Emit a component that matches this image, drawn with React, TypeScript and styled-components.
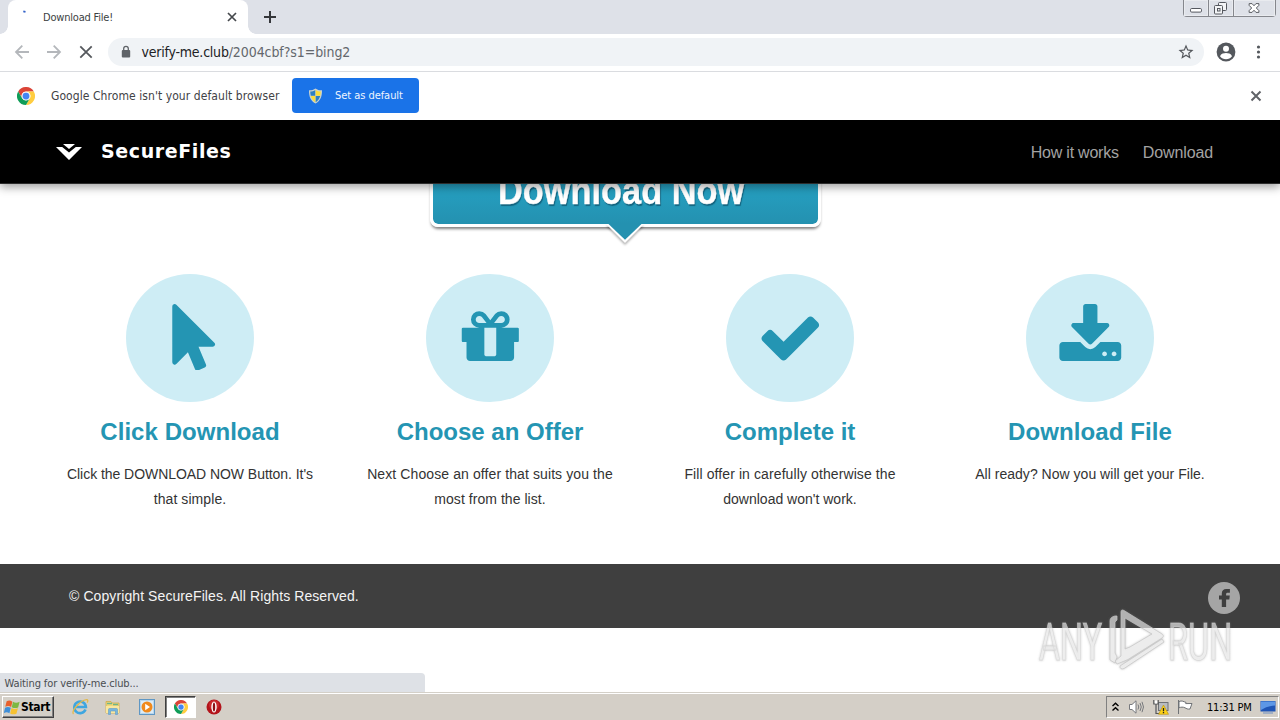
import React from "react";
import styled, { createGlobalStyle } from "styled-components";

const TEAL = "#2495b3";
const UI_FONT = '"DejaVu Sans Condensed", "DejaVu Sans", sans-serif';
const WEB_FONT = '"Liberation Sans", Arial, sans-serif';

const Global = createGlobalStyle`
  * { box-sizing: border-box; }
  body { margin: 0; background: #fff; overflow: hidden; }
`;

const Screen = styled.div`
  position: relative;
  width: 1280px;
  height: 720px;
  display: flex;
  flex-direction: column;
  overflow: hidden;
  background: #fff;
  font-family: ${UI_FONT};
`;

/* Browser chrome */
const TabStrip = styled.div`
  height: 34px;
  display: flex;
  align-items: flex-start;
  background: #dee1e8;
  padding-left: 8px;
`;

const Tab = styled.div`
  position: relative;
  width: 240px;
  height: 34px;
  display: flex;
  align-items: center;
  padding: 0 10px 0 13px;
  border-radius: 8px 8px 0 0;
  background: #fff;

  &::before,
  &::after {
    content: "";
    position: absolute;
    bottom: 0;
    width: 8px;
    height: 8px;
  }
  &::before {
    left: -8px;
    background: radial-gradient(circle at 0 0, transparent 7.5px, #fff 8px);
  }
  &::after {
    right: -8px;
    background: radial-gradient(circle at 100% 0, transparent 7.5px, #fff 8px);
  }
`;

const TabTitle = styled.span`
  flex: 1;
  margin-left: 6px;
  font-size: 11px;
  letter-spacing: -0.2px;
  color: #3c3f43;
`;

const NewTab = styled.div`
  margin: 10px 0 0 15px;
  height: 14px;
  display: flex;
`;

const WindowButtons = styled.div`
  margin-left: auto;
  margin-right: 4px;
  height: 17px;
  display: flex;
  border: 1px solid #85878d;
  border-top: 0;
  border-radius: 0 0 4px 4px;
`;

const WindowButton = styled.div<{ $w: number }>`
  width: ${(p) => p.$w}px;
  height: 16px;
  display: flex;
  justify-content: center;
  box-shadow: inset 0 0 0 1px #e9ebef;
  & + & {
    border-left: 1px solid #85878d;
  }
`;

const Toolbar = styled.div`
  height: 38px;
  display: flex;
  align-items: center;
  padding: 0 14px 1px;
  border-bottom: 1px solid #dadce0;
`;

const NavIcon = styled.div<{ $w: number }>`
  width: ${(p) => p.$w}px;
  height: 16px;
  display: flex;
`;

const Omnibox = styled.div`
  flex: 1;
  height: 28px;
  display: flex;
  align-items: center;
  margin-right: 12px;
  padding: 0 9px 0 13px;
  border-radius: 14px;
  background: #f0f3f6;
`;

const Url = styled.div`
  flex: 1;
  margin-left: 10.5px;
  font-size: 14px;
  color: #63676c;
  letter-spacing: -0.08px;
`;

const Host = styled.span`
  color: #202124;
  letter-spacing: -0.22px;
`;

const InfoBar = styled.div`
  height: 48px;
  display: flex;
  align-items: center;
  padding: 0 18px 1px 17px;
`;

const InfoText = styled.span`
  margin-left: 16px;
  width: 241px;
  font-size: 12px;
  letter-spacing: 0.07px;
  color: #3f4246;
  white-space: nowrap;
`;

const DefaultButton = styled.div`
  width: 127px;
  height: 35px;
  display: flex;
  align-items: center;
  gap: 12px;
  margin-right: auto;
  padding-left: 16px;
  border-radius: 4px;
  background: #1a73e8;
  color: #eef5ff;
  font-size: 11px;
  letter-spacing: -0.05px;
`;

/* Web page */
const Page = styled.main`
  position: relative;
  height: 572px;
  display: flex;
  flex-direction: column;
  overflow: hidden;
  font-family: ${WEB_FONT};
`;

const SiteHeader = styled.header`
  position: relative;
  z-index: 2;
  flex: none;
  height: 64px;
  display: flex;
  align-items: center;
  padding: 0 67px 0 56px;
  background: #000;
  border-bottom: 1px solid #2c2c2c;
  box-shadow: 0 3px 9px rgba(0, 0, 0, 0.38);
`;

const Brand = styled.span`
  margin: 0 auto 2px 19px;
  font-family: "DejaVu Sans", sans-serif;
  font-weight: 700;
  font-size: 19px;
  letter-spacing: 0.6px;
  color: #fff;
`;

const NavLink = styled.a<{ $ls: number }>`
  margin-left: 24px;
  margin-top: 2px;
  font-size: 16px;
  letter-spacing: ${(p) => p.$ls}px;
  color: #a3a3a3;
`;

const Hero = styled.section`
  flex: none;
  height: 90px;
  display: flex;
  flex-direction: column;
  align-items: center;
  padding-right: 29px;
`;

const DownloadButton = styled.div`
  flex: none;
  width: 391px;
  height: 105px;
  margin-top: -62px;
  display: flex;
  justify-content: center;
  border: 3px solid #fff;
  border-radius: 8px;
  background: linear-gradient(#2dadcd 0, #259dbe 68%, #2491b0 100%);
  background-clip: padding-box;
  box-shadow: 0 3px 3px -1px rgba(0, 0, 0, 0.5);
`;

const ButtonLabel = styled.span`
  margin-top: 44px;
  margin-right: 9px;
  font-weight: 700;
  font-size: 38px;
  line-height: 44px;
  white-space: nowrap;
  color: #fff;
  -webkit-text-stroke: 0.4px #fff;
  text-shadow: 1px 2px 1px rgba(10, 70, 95, 0.65);
  transform: scaleX(0.905);
`;

const Pointer = styled.svg`
  position: relative;
  flex: none;
  left: -0.5px;
  margin-top: -3px;
  filter: drop-shadow(0 2px 1px rgba(0, 0, 0, 0.3));
`;

const Steps = styled.section`
  flex: none;
  height: 290px;
  display: grid;
  grid-template-columns: repeat(4, 300px);
  padding-left: 40px;
`;

const Step = styled.article`
  display: flex;
  flex-direction: column;
  align-items: center;
  text-align: center;
`;

const Circle = styled.div`
  width: 128px;
  height: 128px;
  display: flex;
  align-items: center;
  justify-content: center;
  padding-bottom: 2px;
  border-radius: 50%;
  background: #ceedf5;
`;

const StepTitle = styled.h2<{ $ls?: number }>`
  margin: 16px 0;
  font-size: 24px;
  line-height: 28px;
  letter-spacing: ${(p) => p.$ls ?? 0}px;
  color: ${TEAL};
`;

const StepLine = styled.p<{ $ls: number }>`
  margin: 0;
  font-size: 14px;
  line-height: 25px;
  letter-spacing: ${(p) => p.$ls}px;
  white-space: nowrap;
  color: #333;
`;

const Footer = styled.footer`
  flex: none;
  height: 64px;
  display: flex;
  align-items: center;
  justify-content: space-between;
  padding: 0 40px 0 69px;
  background: #3f3f3f;
  color: #f4f4f4;
  font-size: 14px;
  letter-spacing: 0.09px;
`;

const FacebookBadge = styled.svg`
  margin-top: 4px;
`;

const StatusBubble = styled.div`
  position: absolute;
  left: 0;
  bottom: 0;
  width: 425px;
  height: 19px;
  padding-left: 4.5px;
  border-radius: 0 4px 0 0;
  background: #dee1e6;
  color: #4a4d51;
  font: 11px/21px ${UI_FONT};
  letter-spacing: -0.11px;
`;

const Watermark = styled.svg`
  position: absolute;
  left: 1030px;
  top: 484px;
  filter: drop-shadow(0 0 1.2px rgba(130, 130, 130, 0.6));
`;

/* Taskbar */
const Taskbar = styled.div`
  height: 28px;
  display: flex;
  align-items: center;
  padding: 1px 0 0 2px;
  border-top: 1px solid #d4d0c8;
  background: #d4cfc7;
  box-shadow: inset 0 1px 0 #fff;
`;

const StartButton = styled.div`
  width: 52px;
  height: 22px;
  display: flex;
  align-items: center;
  padding-left: 1px;
  background: #d4d0c8;
  border: 1px solid;
  border-color: #fff #404040 #404040 #fff;
  box-shadow: inset -1px -1px 0 #808080;
  font-weight: 700;
  font-size: 12px;
  letter-spacing: -0.35px;
  color: #000;
`;

const Launcher = styled.div<{ $active?: boolean; $ml: number }>`
  width: ${(p) => (p.$active ? 31 : 18)}px;
  height: 22px;
  margin-left: ${(p) => p.$ml}px;
  display: flex;
  align-items: center;
  justify-content: center;
  ${(p) =>
    p.$active &&
    `background: #fff;
     border: 1px solid;
     border-color: #404040 #fff #fff #404040;
     box-shadow: inset 1px 1px 0 #808080;`}
`;

const Tray = styled.div`
  margin-left: auto;
  margin-right: 1px;
  width: 173px;
  height: 22px;
  display: flex;
  align-items: center;
  padding-left: 5px;
  border: 1px solid;
  border-color: #808080 #fff #fff #808080;
`;

const TrayIcon = styled.svg<{ $ml?: number }>`
  flex: none;
  margin-left: ${(p) => p.$ml ?? 0}px;
`;

const Clock = styled.span`
  margin: 0 0 0 14px;
  width: 53px;
  font-size: 11px;
  letter-spacing: -0.2px;
  white-space: nowrap;
  color: #000;
`;

const ChromeLogo = ({ size }: { size: number }) => (
  <svg width={size} height={size} viewBox="0 0 48 48">
    <path fill="#db4437" d="M3.2 12A24 24 0 0 1 44.8 12H24A12 12 0 0 0 13.6 30Z" />
    <path fill="#ffcd40" d="M44.8 12A24 24 0 0 1 24 48L34.4 30A12 12 0 0 0 24 12Z" />
    <path fill="#0f9d58" d="M3.2 12L13.6 30A12 12 0 0 0 34.4 30L24 48A24 24 0 0 1 3.2 12Z" />
    <circle cx="24" cy="24" r="11.5" fill="#f1f1f1" />
    <circle cx="24" cy="24" r="9" fill="#4285f4" />
  </svg>
);

const StepIcon = ({ children }: { children: React.ReactNode }) => (
  <svg width="66.6" height="66.6" viewBox="0 0 1792 1792" fill={TEAL}>
    {children}
  </svg>
);

type Line = [text: string, spacing: number];

const steps: { title: string; ls: number; lines: Line[]; icon: React.ReactNode }[] = [
  {
    title: "Click Download",
    ls: 0.05,
    lines: [
      ["Click the DOWNLOAD NOW Button. It's", -0.05],
      ["that simple.", 0.07],
    ],
    icon: (
      <path
        transform="translate(411 0)"
        d="M1133 1043q31 30 14 69-17 40-59 40h-382l201 476q10 25 0 49t-34 35l-177 75q-25 10-49 0t-35-34l-191-452-312 312q-19 19-45 19-12 0-24-5-40-17-40-59v-1504q0-42 40-59 12-5 24-5 27 0 45 19z"
      />
    ),
  },
  {
    title: "Choose an Offer",
    ls: 0,
    lines: [
      ["Next Choose an offer that suits you the", 0.1],
      ["most from the list.", 0.05],
    ],
    icon: (
      <path d="M1056 1356v-716h-320v716q0 25 18 38.5t46 13.5h192q28 0 46-13.5t18-38.5zm-456-844h195l-126-161q-26-31-69-31-40 0-68 28t-28 68 28 68 68 28zm688-96q0-40-28-68t-68-28q-43 0-69 31l-125 161h194q40 0 68-28t28-68zm376 256v320q0 14-9 23t-23 9h-96v416q0 40-28 68t-68 28h-1088q-40 0-68-28t-28-68v-416h-96q-14 0-23-9t-9-23v-320q0-14 9-23t23-9h440q-93 0-158.5-65.5t-65.5-158.5 65.5-158.5 158.5-65.5q107 0 168 77l128 165 128-165q61-77 168-77 93 0 158.5 65.5t65.5 158.5-65.5 158.5-158.5 65.5h440q14 0 23 9t9 23z" />
    ),
  },
  {
    title: "Complete it",
    ls: 0,
    lines: [
      ["Fill offer in carefully otherwise the", 0.1],
      ["download won't work.", 0],
    ],
    icon: (
      <path d="M1671 566q0 40-28 68l-724 724-136 136q-28 28-68 28t-68-28l-136-136-362-362q-28-28-28-68t28-68l136-136q28-28 68-28t68 28l294 295 656-657q28-28 68-28t68 28l136 136q28 28 28 68z" />
    ),
  },
  {
    title: "Download File",
    ls: 0.1,
    lines: [["All ready? Now you will get your File.", 0.02]],
    icon: (
      <path d="M1344 1344q0-26-19-45t-45-19-45 19-19 45 19 45 45 19 45-19 19-45zm256 0q0-26-19-45t-45-19-45 19-19 45 19 45 45 19 45-19 19-45zm128-224v320q0 40-28 68t-68 28h-1472q-40 0-68-28t-28-68v-320q0-40 28-68t68-28h465l135 136q58 56 136 56t136-56l136-136h464q40 0 68 28t28 68zm-325-569q17 41-14 70l-448 448q-18 19-45 19t-45-19l-448-448q-31-29-14-70 17-39 59-39h256v-448q0-26 19-45t45-19h256q26 0 45 19t19 45v448h256q42 0 59 39z" />
    ),
  },
];

export default function App() {
  return (
    <Screen>
      <Global />
      <TabStrip>
        <Tab>
          <svg width="16" height="16" viewBox="0 0 16 16">
            <path d="M2.300 2.300l2.200 0.500" stroke="#3463c9" strokeWidth="1.800" />
          </svg>
          <TabTitle>Download File!</TabTitle>
          <svg width="12" height="12" viewBox="0 0 12 12" stroke="#45484c" strokeWidth="1.700">
            <path d="M2 2l8 8M10 2l-8 8" />
          </svg>
        </Tab>
        <NewTab>
          <svg width="14" height="14" viewBox="0 0 14 14" stroke="#35373b" strokeWidth="2">
            <path d="M7 1v12M1 7h12" />
          </svg>
        </NewTab>
        <WindowButtons>
          <WindowButton $w={24}>
            <svg width="24" height="16" viewBox="0 0 24 16">
              <rect x="6.500" y="8.500" width="11" height="3.600" rx="1.200" fill="#fff" stroke="#55585f" />
            </svg>
          </WindowButton>
          <WindowButton $w={25}>
            <svg width="24" height="16" viewBox="0 0 24 16" fill="#f3f4f6" stroke="#55585f">
              <rect x="9.500" y="2.500" width="8" height="8" rx="1" />
              <rect x="5.500" y="5.500" width="8" height="8.500" rx="1" />
              <rect x="8.500" y="8.500" width="2.500" height="2.500" />
            </svg>
          </WindowButton>
          <WindowButton $w={42}>
            <svg width="42" height="16" viewBox="0 0 42 16">
              <path
                d="M15.500 3.500h3l2 2.200 2-2.200h3v1.800l-2.600 2.700 2.600 2.700v1.800h-3l-2-2.200-2 2.200h-3v-1.800l2.600-2.700-2.600-2.700z"
                fill="#fff"
                stroke="#55585f"
              />
            </svg>
          </WindowButton>
        </WindowButtons>
      </TabStrip>

      <Toolbar>
        <NavIcon $w={32}>
          <svg width="16" height="16" viewBox="0 0 16 16" fill="none" stroke="#b4b7bb" strokeWidth="1.800">
            <path d="M15 8H2M8.300 1.700L2 8l6.300 6.300" />
          </svg>
        </NavIcon>
        <NavIcon $w={32}>
          <svg width="16" height="16" viewBox="0 0 16 16" fill="none" stroke="#b4b7bb" strokeWidth="1.800">
            <path d="M1 8h13M7.700 1.700L14 8l-6.300 6.300" />
          </svg>
        </NavIcon>
        <NavIcon $w={30}>
          <svg width="16" height="16" viewBox="0 0 16 16" stroke="#55585d" strokeWidth="1.800">
            <path d="M2.300 2.300l11.400 11.400M13.700 2.300L2.300 13.700" />
          </svg>
        </NavIcon>
        <Omnibox>
          <svg width="10" height="14" viewBox="0 0 10 14">
            <rect x="0.800" y="5" width="8.400" height="7.500" rx="1" fill="#5f6368" />
            <path d="M2.700 5.500V3.600a2.300 2.300 0 0 1 4.600 0v1.900" fill="none" stroke="#5f6368" strokeWidth="1.300" />
          </svg>
          <Url>
            <Host>verify-me.club</Host>/2004cbf?s1=bing2
          </Url>
          <svg width="18" height="18" viewBox="0 0 24 24" fill="#54575c">
            <path d="M22 9.240l-7.190-.62L12 2 9.190 8.630 2 9.240l5.460 4.730L5.820 21 12 17.270 18.180 21l-1.630-7.030L22 9.240zM12 15.400l-3.760 2.270 1-4.280-3.320-2.880 4.380-.38L12 6.100l1.710 4.040 4.380.38-3.320 2.880 1 4.280L12 15.400z" />
          </svg>
        </Omnibox>
        <svg width="20" height="20" viewBox="0 0 20 20">
          <circle cx="10" cy="10" r="9.400" fill="#54585d" />
          <circle cx="10" cy="6.800" r="3" fill="#fff" />
          <path d="M4 14.200c1-2.600 4-3.200 6-3.200s5 .6 6 3.200a7.400 7.400 0 0 1-12 0z" fill="#fff" />
        </svg>
        <svg width="30" height="16" viewBox="0 0 30 16" fill="#54585d">
          <circle cx="22.500" cy="3" r="1.600" />
          <circle cx="22.500" cy="8" r="1.600" />
          <circle cx="22.500" cy="13" r="1.600" />
        </svg>
      </Toolbar>

      <InfoBar>
        <ChromeLogo size={18} />
        <InfoText>Google Chrome isn't your default browser</InfoText>
        <DefaultButton>
          <svg width="15" height="16" viewBox="0 0 15 16">
            <path d="M7.500 0.500C5.500 2 3.200 2.400 1 2.300 0.800 8.500 2.600 13 7.500 15.500 12.400 13 14.200 8.500 14 2.300 11.800 2.400 9.500 2 7.500 0.500z" fill="#c9d2cf" />
            <path d="M7.300 2C5.800 3 4 3.500 2.300 3.500c0 1.600.1 3 .5 4.300h4.500z" fill="#2d7fc4" />
            <path d="M7.700 2C9.200 3 11 3.500 12.700 3.500c0 1.600-.1 3-.5 4.300H7.700z" fill="#fbdd3b" />
            <path d="M2.800 8.100c.7 2.500 2.200 4.700 4.500 6.100V8.100z" fill="#fbdd3b" />
            <path d="M12.200 8.100c-.7 2.500-2.200 4.700-4.500 6.100V8.100z" fill="#2d7fc4" />
          </svg>
          Set as default
        </DefaultButton>
        <svg width="12" height="12" viewBox="0 0 12 12" stroke="#606368" strokeWidth="2">
          <path d="M1.500 1.500l9 9M10.500 1.500l-9 9" />
        </svg>
      </InfoBar>

      <Page>
        <SiteHeader>
          <svg width="26" height="18" viewBox="0 0 26 18" fill="#fff">
            <path d="M7 1h12l-6 5z" />
            <path d="M0 4h6.200L13 9.500 19.800 4H26L13 17z" />
          </svg>
          <Brand>SecureFiles</Brand>
          <NavLink $ls={-0.22}>How it works</NavLink>
          <NavLink $ls={-0.12}>Download</NavLink>
        </SiteHeader>

        <Hero>
          <DownloadButton>
            <ButtonLabel>Download Now</ButtonLabel>
          </DownloadButton>
          <Pointer width="40" height="20" viewBox="0 0 40 20">
            <path d="M1 0L20 19 39 0z" fill="#fff" />
            <path d="M3.500 0L20 15.800 36.500 0z" fill="#2491b0" />
          </Pointer>
        </Hero>

        <Steps>
          {steps.map((s) => (
            <Step key={s.title}>
              <Circle>
                <StepIcon>{s.icon}</StepIcon>
              </Circle>
              <StepTitle $ls={s.ls}>{s.title}</StepTitle>
              {s.lines.map(([text, ls]) => (
                <StepLine key={text} $ls={ls}>
                  {text}
                </StepLine>
              ))}
            </Step>
          ))}
        </Steps>

        <Footer>
          <span>© Copyright SecureFiles. All Rights Reserved.</span>
          <FacebookBadge width="32" height="32" viewBox="0 0 32 32">
            <circle cx="16" cy="16" r="16" fill="#a5a5a5" />
            <path
              d="M13.800 25v-7.600H11v-3.900h2.800v-1.900c0-3 1.700-4.600 4.400-4.600h3.700v3.700h-2.200c-1.200 0-1.600.5-1.600 1.500v1.300h3.700l-.5 3.900h-3.200V25z"
              fill="#3f3f3f"
            />
          </FacebookBadge>
        </Footer>

        <Watermark width="220" height="80" viewBox="0 0 220 80">
          <g
            fill="#fff"
            fillOpacity={0.55}
            stroke="#d0d0d0"
            strokeOpacity={0.6}
            strokeWidth={1}
            fontFamily="Roboto, sans-serif"
            fontSize="52"
          >
            <text transform="translate(9 56) scale(0.650 1)" textLength="97" lengthAdjust="spacingAndGlyphs">
              ANY
            </text>
            <text transform="translate(138 56) scale(0.650 1)" textLength="99" lengthAdjust="spacingAndGlyphs">
              RUN
            </text>
          </g>
          <g fill="#fff" fillOpacity={0.55} stroke="#c4c4c4" strokeOpacity={0.7} strokeLinejoin="round">
            <path d="M80 17q0-4 5-5h2v4l-2 2v31l2 4-2 6-5-3z" />
            <path
              fillRule="evenodd"
              d="M91 8q0-3 3-1.500L132 30q3 2 0 4L98 55.500 87 60l-2-3 6-5zM95 14v31l5-2 22-13z"
            />
            <path d="M90 62l42-27 2 3-40 26.500q-4 1.500-4-2.500z" />
          </g>
        </Watermark>

        <StatusBubble>Waiting for verify-me.club...</StatusBubble>
      </Page>

      <Taskbar>
        <StartButton>
          <svg width="17" height="17" viewBox="0 0 16 16">
            <path d="M2.500 2.200C4.500 0.900 6 1.200 7.900 2.500L6.700 7.500C4.900 6.300 3.200 6.300 1.200 7.400z" fill="#e8602c" />
            <path d="M8.500 2.700c1.900 1.100 3.800 1.100 6.200 0L13.300 7.900c-2.200 1-4 .8-6-.2z" fill="#7db843" />
            <path d="M1 8.200c1.900-1.100 3.700-1 5.400.1L5.100 13.400C3.400 12.300 1.700 12.200-.2 13.200z" fill="#3f8fd8" />
            <path d="M7.100 8.500c2 1.100 3.800 1.100 6 .2L11.700 13.800c-2.100.9-4 .8-5.900-.2z" fill="#f6c231" />
          </svg>
          Start
        </StartButton>
        <Launcher $ml={17}>
          <svg width="18" height="18" viewBox="0 0 18 18" fill="none">
            <path d="M14.500 11.500A5.800 5.800 0 1 1 14.900 9H5" stroke="#3ea6e0" strokeWidth="2.600" />
            <path d="M2.500 16C0 13 9 2.500 15.500 1.700c1.600-.1 1.700 1.400.6 3" stroke="#e3b94a" strokeWidth="1.300" />
          </svg>
        </Launcher>
        <Launcher $ml={15}>
          <svg width="16" height="17" viewBox="0 0 16 17">
            <path d="M1 2.500h5l1 1.500h7v10H1z" fill="#f2d778" stroke="#d1ac4a" strokeWidth=".8" />
            <path d="M2 4.500h5M8 5.500h5" stroke="#6fb58a" strokeWidth="1.400" />
            <path d="M1 7h13v7H1z" fill="#f9e79e" />
            <path d="M3.500 15.500V10.500q0-1 1-1h7q1 0 1 1v5h-2V12h-5v3.500z" fill="#78b6dd" stroke="#5c9cc9" strokeWidth=".6" />
          </svg>
        </Launcher>
        <Launcher $ml={16}>
          <svg width="16" height="16" viewBox="0 0 16 16">
            <rect x="0.500" y="0.500" width="15" height="15" fill="#b8d7ee" stroke="#5f97c4" />
            <rect x="2" y="2" width="12" height="12" fill="#dcecf7" />
            <circle cx="8" cy="8" r="5.500" fill="#f08a1d" />
            <path d="M6.200 4.800v6.400L11 8z" fill="#fff" />
          </svg>
        </Launcher>
        <Launcher $ml={9} $active>
          <ChromeLogo size={14} />
        </Launcher>
        <Launcher $ml={9}>
          <svg width="16" height="16" viewBox="0 0 16 16">
            <circle cx="8" cy="8" r="7.500" fill="#b3141b" />
            <circle cx="8" cy="6" r="5" fill="#d8383c" opacity=".6" />
            <ellipse cx="8" cy="8" rx="2.700" ry="5.500" fill="#fff" />
            <ellipse cx="8" cy="8" rx="1.200" ry="4.600" fill="#8e1016" />
          </svg>
        </Launcher>
        <Tray>
          <TrayIcon width="7" height="10" viewBox="0 0 7 10" fill="none" stroke="#000" strokeWidth="1.400">
            <path d="M0.500 4L3.500 1.200 6.500 4M0.500 8.500L3.500 5.700 6.500 8.500" />
          </TrayIcon>
          <TrayIcon $ml={9} width="17" height="16" viewBox="0 0 17 16" fill="none" stroke="#77797d">
            <path d="M1.500 5.500h2.500L8 1.800v12.400L4 10.500H1.500z" fill="#fff" />
            <path d="M10 5.500q1.500 2.500 0 5M12 4q2.500 4 0 8M14 2.800q3 5.200 0 10.400" />
          </TrayIcon>
          <TrayIcon $ml={8} width="16" height="16" viewBox="0 0 16 16">
            <rect x="5.500" y="3.500" width="9.500" height="8" fill="#b9bcc0" stroke="#6f7276" />
            <path d="M.8 1v4h4.400V1M3 5v9.500h4" fill="none" stroke="#55575b" strokeWidth="1.200" />
            <rect x="1.800" y="1.500" width="2.400" height="3" fill="#fff" />
            <path d="M10.500 6l5 9.300h-10z" fill="#fcd116" stroke="#b7900c" strokeWidth=".6" />
            <path d="M10.500 9v3.200M10.500 13v1.300" stroke="#222" strokeWidth="1.300" />
          </TrayIcon>
          <TrayIcon $ml={8} width="16" height="16" viewBox="0 0 16 16" fill="#fff" stroke="#6f7276">
            <path d="M1.500 1v14M2 2.500c3-1.300 4.500.2 7 .9l-.3 1.200 6.300-.1-2 5.500c-2.500.5-3.500-.5-5-1.200-2-1-4-.8-6 0z" />
          </TrayIcon>
          <Clock>11:31 PM</Clock>
          <TrayIcon width="16" height="16" viewBox="0 0 16 16">
            <rect x="0.500" y="2" width="15" height="10.500" fill="#1f55b5" />
            <path d="M1 2.500h14v4Q7 7 1 11z" fill="#5d97e6" />
            <path d="M3 14h10" stroke="#8fa5c4" strokeWidth="1.500" />
          </TrayIcon>
        </Tray>
      </Taskbar>
    </Screen>
  );
}
